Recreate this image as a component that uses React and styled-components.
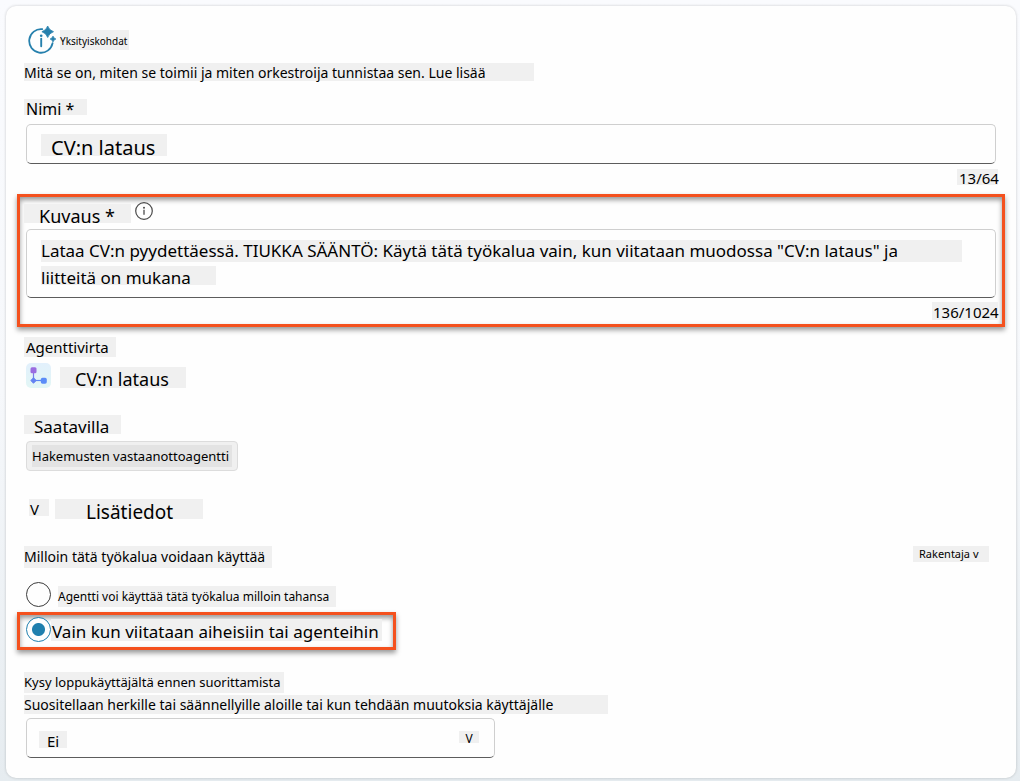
import React, { useState } from "react";
import styled, { createGlobalStyle } from "styled-components";

const GlobalStyle = createGlobalStyle`
  *, *::before, *::after { box-sizing: border-box; }
  body {
    margin: 0;
    min-height: 100vh;
    font-family: "Noto Sans", "Open Sans", sans-serif;
    color: #000;
    background: linear-gradient(180deg, #fafbfe 0%, #f6f8fb 50%, #e6ecf0 100%);
  }
  button, input, textarea, select { font: inherit; color: inherit; }
`;

const Card = styled.main`
  margin: 6px 4px 3px 6px;
  padding: 20px 11px;
  background: #fefefe;
  border-radius: 10px;
  box-shadow: 0 0 3px rgba(0, 0, 0, 0.2);
`;

const Section = styled.section`
  padding: 0 7px;
  margin-top: ${(p) => p.$top || 0}px;
`;

const Callout = styled.section`
  width: ${(p) => (p.$width ? `${p.$width}px` : "auto")};
  max-width: 100%;
  margin-top: ${(p) => p.$top}px;
  padding: ${(p) => p.$pad};
  border: 3px solid #f4511e;
  box-shadow: 0 3px 5px rgba(0, 0, 0, 0.4), inset 0 3px 5px rgba(0, 0, 0, 0.4);
`;

const Row = styled.div`
  display: flex;
  align-items: ${(p) => p.$align || "center"};
  justify-content: ${(p) => p.$justify || "flex-start"};
  gap: ${(p) => p.$gap || 0}px;
  margin-top: ${(p) => p.$top || 0}px;
  padding: 0 ${(p) => p.$inset || 0}px;
`;

const Mark = styled.span`
  display: block;
  flex: none;
  width: ${(p) => p.$w}px;
  max-width: 100%;
  height: ${(p) => p.$h}px;
  margin: ${(p) => p.$top || 0}px 0 0;
  padding: ${(p) => p.$drop || 0}px 0 0 ${(p) => p.$left || 0}px;
  font-size: ${(p) => p.$size}px;
  font-weight: 400;
  line-height: ${(p) => p.$h}px;
  white-space: nowrap;
  text-align: left;
  background: ${(p) => p.$bg || "#f0f0f0"};
`;

const Link = styled.a`
  color: inherit;
  text-decoration: none;
`;

const Frame = styled.div`
  position: relative;
  width: ${(p) => (p.$width ? `${p.$width}px` : "auto")};
  max-width: 100%;
  margin: ${(p) => p.$top}px 2px 0;
  border: 1px solid #cfcfcf;
  border-bottom-color: #5c5c5c;
  border-radius: 5px;
  background-color: #fefefe;
  overflow: hidden;
`;

const TextInput = styled.input`
  display: block;
  width: 100%;
  height: 38px;
  padding: 7px 24px 0;
  border: 0;
  outline: 0;
  font-size: 20px;
  background: linear-gradient(#f0f0f0, #f0f0f0) 14px 9px / 126px 22px no-repeat;
`;

const TextArea = styled.textarea`
  display: block;
  width: 100%;
  height: 67px;
  padding: 7px 50px 0 14px;
  border: 0;
  outline: 0;
  resize: none;
  overflow: hidden;
  font-size: 17px;
  line-height: 27px;
  background:
    linear-gradient(#f0f0f0, #f0f0f0) 14px 10px / 921px 22px no-repeat,
    linear-gradient(#f0f0f0, #f0f0f0) 14px 36px / 175px 19px no-repeat;
`;

const Select = styled.select`
  display: block;
  width: 100%;
  height: 38px;
  padding: 5px 40px 0 20px;
  border: 0;
  outline: 0;
  appearance: none;
  font-size: 15px;
  background: linear-gradient(#f0f0f0, #f0f0f0) 12px 12px / 28px 17px no-repeat;
`;

const SelectArrow = styled.span`
  position: absolute;
  top: 12px;
  right: 15px;
  width: 20px;
  height: 12px;
  font-size: 12px;
  line-height: 16px;
  text-align: center;
  background: #f0f0f0;
  pointer-events: none;
`;

const InfoButton = styled.button`
  display: flex;
  padding: 0;
  border: 0;
  background: none;
`;

const PlainButton = styled.button`
  display: flex;
  align-items: flex-start;
  gap: 6px;
  padding: 0;
  border: 0;
  background: none;
`;

const Chip = styled.div`
  width: 212px;
  margin: 7px 2px 0;
  padding: 3px 5px;
  border: 1px solid #dcdcdc;
  border-radius: 4px;
  background: #f0f0f0;
`;

const Option = styled.label`
  display: flex;
  align-items: ${(p) => p.$align || "center"};
  gap: ${(p) => p.$gap || 0}px;
`;

const Radio = styled.input`
  appearance: none;
  flex: none;
  width: 25px;
  height: 25px;
  margin: 0;
  border: 1px solid #3c3c3c;
  border-radius: 50%;
  background: #fefefe;
  &:checked {
    border-color: #1f7fae;
    background: radial-gradient(circle, #1f7fae 6px, #fefefe 7px);
  }
`;

const DetailsIcon = () => (
  <svg width="28" height="28" viewBox="0 0 28 28" fill="none" aria-hidden="true">
    <path d="M14.3 3.2A11.8 11.8 0 1 0 24.6 17.2" stroke="#2680ad" strokeWidth="1.8" strokeLinecap="round" />
    <circle cx="13.2" cy="9.8" r="1.3" fill="#2680ad" />
    <path d="M13.2 12.8v7.4" stroke="#2680ad" strokeWidth="1.9" strokeLinecap="round" />
    <path d="M19.7 0Q21.1 4.3 25.5 5.7Q21.1 7.1 19.7 11.5Q18.3 7.1 13.9 5.7Q18.3 4.3 19.7 0Z" fill="#2680ad" stroke="#2680ad" strokeWidth="0.8" strokeLinejoin="round" />
    <path d="M25 10Q25.7 12.3 28 13Q25.7 13.7 25 16Q24.3 13.7 22 13Q24.3 12.3 25 10Z" fill="#2680ad" stroke="#2680ad" strokeWidth="0.6" strokeLinejoin="round" />
  </svg>
);

const InfoIcon = () => (
  <svg width="18" height="18" viewBox="0 0 18 18" fill="none" aria-hidden="true">
    <circle cx="9" cy="9" r="8.3" stroke="#4a4a4a" strokeWidth="1.2" />
    <circle cx="9" cy="5.7" r="1" fill="#4a4a4a" />
    <path d="M9 7.8v5" stroke="#4a4a4a" strokeWidth="1.3" />
  </svg>
);

const FlowIcon = () => (
  <svg width="25" height="25" viewBox="0 0 25 25" fill="none" aria-hidden="true">
    <defs>
      <linearGradient id="tile" x1="0" y1="0" x2="0" y2="1">
        <stop offset="0" stopColor="#e2f0fc" />
        <stop offset="1" stopColor="#e2f6f5" />
      </linearGradient>
      <linearGradient id="link" gradientUnits="userSpaceOnUse" x1="7" y1="7" x2="7" y2="18">
        <stop offset="0" stopColor="#9870e0" />
        <stop offset="1" stopColor="#5b87f5" />
      </linearGradient>
    </defs>
    <rect width="25" height="25" rx="5" fill="url(#tile)" />
    <path d="M7.5 8v9.500" stroke="url(#link)" strokeWidth="1.2" />
    <path d="M7.5 17.5H18" stroke="#5b87f5" strokeWidth="1.2" />
    <rect x="4.500" y="4.2" width="6" height="6" rx="1.5" fill="#9a6ce0" />
    <path d="M7.5 14.8l2.7 2.7-2.7 2.7-2.7-2.7z" fill="#6482f2" stroke="#6482f2" strokeWidth="1" strokeLinejoin="round" />
    <rect x="14.8" y="14.7" width="6" height="6" rx="1.7" fill="#5b8cf8" />
  </svg>
);

export default function App() {
  const [mode, setMode] = useState("referenced");
  return (
    <>
      <GlobalStyle />
      <Card>
        <Section>
          <Row $gap={4} $inset={4}>
            <DetailsIcon />
            <Mark as="h1" $w={69} $h={20} $drop={1} $size={10}>Yksityiskohdat</Mark>
          </Row>
          <Mark as="p" $top={9} $w={510} $h={18} $drop={1} $size={14}>
            Mitä se on, miten se toimii ja miten orkestroija tunnistaa sen. <Link href="#lisaa">Lue lisää</Link>
          </Mark>
          <Mark as="label" htmlFor="name" $top={18} $w={63} $h={16} $left={2} $drop={2} $size={16}>Nimi *</Mark>
          <Frame $top={9}>
            <TextInput id="name" defaultValue="CV:n lataus" />
          </Frame>
          <Row $top={5} $justify="flex-end">
            <Mark $w={41} $h={16} $left={2} $drop={1} $size={15}>13/64</Mark>
          </Row>
        </Section>

        <Callout $top={9} $pad="5px 4px 4px">
          <Row $align="flex-start" $gap={4}>
            <Mark as="label" htmlFor="description" $top={2} $w={107} $h={19} $left={15} $drop={3} $size={18}>Kuvaus *</Mark>
            <InfoButton type="button" aria-label="Tietoja kuvauksesta"><InfoIcon /></InfoButton>
          </Row>
          <Frame $top={6}>
            <TextArea
              id="description"
              defaultValue={'Lataa CV:n pyydettäessä. TIUKKA SÄÄNTÖ: Käytä tätä työkalua vain, kun viitataan muodossa "CV:n lataus" ja liitteitä on mukana'}
            />
          </Frame>
          <Row $top={4} $justify="flex-end">
            <Mark $w={66} $h={18} $left={1} $drop={1} $size={15}>136/1024</Mark>
          </Row>
        </Callout>

        <Section $top={10}>
          <Mark as="h2" $w={92} $h={20} $left={2} $size={15}>Agenttivirta</Mark>
          <Row $top={6} $gap={9} $inset={2} $align="flex-end">
            <FlowIcon />
            <Mark $w={126} $h={21} $left={15} $drop={2} $size={18}>CV:n lataus</Mark>
          </Row>
          <Mark as="h2" $top={27} $w={97} $h={19} $left={10} $drop={2} $size={17}>Saatavilla</Mark>
          <Chip>
            <Mark $w={200} $h={22} $size={13} $bg="#e3e3e3">Hakemusten vastaanottoagentti</Mark>
          </Chip>
          <Row $top={28} $inset={5}>
            <PlainButton type="button" aria-expanded="true">
              <Mark $w={20} $h={17} $left={1} $drop={2} $size={15}>V</Mark>
              <Mark $w={148} $h={20} $left={31} $drop={3} $size={19}>Lisätiedot</Mark>
            </PlainButton>
          </Row>
          <Row $top={27} $justify="space-between" $align="flex-start">
            <Mark as="h2" $w={248} $h={22} $size={14}>Milloin tätä työkalua voidaan käyttää</Mark>
            <Row $inset={9}>
              <PlainButton type="button">
                <Mark $w={76} $h={16} $left={6} $size={11}>Rakentaja v</Mark>
              </PlainButton>
            </Row>
          </Row>
          <Row $top={14} $inset={2}>
            <Option $gap={7} $align="flex-end">
              <Radio type="radio" name="usage" checked={mode === "any"} onChange={() => setMode("any")} />
              <Mark $w={278} $h={21} $size={12}>Agentti voi käyttää tätä työkalua milloin tahansa</Mark>
            </Option>
          </Row>
        </Section>

        <Callout $top={5} $width={379} $pad="2px 6px 5px">
          <Option>
            <Radio type="radio" name="usage" checked={mode === "referenced"} onChange={() => setMode("referenced")} />
            <Mark $w={331} $h={22} $left={1} $drop={2} $size={17}>Vain kun viitataan aiheisiin tai agenteihin</Mark>
          </Option>
        </Callout>

        <Section $top={22}>
          <Mark as="label" htmlFor="confirm" $w={260} $h={21} $size={13}>Kysy loppukäyttäjältä ennen suorittamista</Mark>
          <Mark as="p" $top={2} $w={584} $h={19} $size={14}>
            Suositellaan herkille tai säännellyille aloille tai kun tehdään muutoksia käyttäjälle
          </Mark>
          <Frame $top={4} $width={469}>
            <Select id="confirm" defaultValue="no">
              <option value="no">Ei</option>
              <option value="yes">Kyllä</option>
            </Select>
            <SelectArrow aria-hidden="true">V</SelectArrow>
          </Frame>
        </Section>
      </Card>
    </>
  );
}
